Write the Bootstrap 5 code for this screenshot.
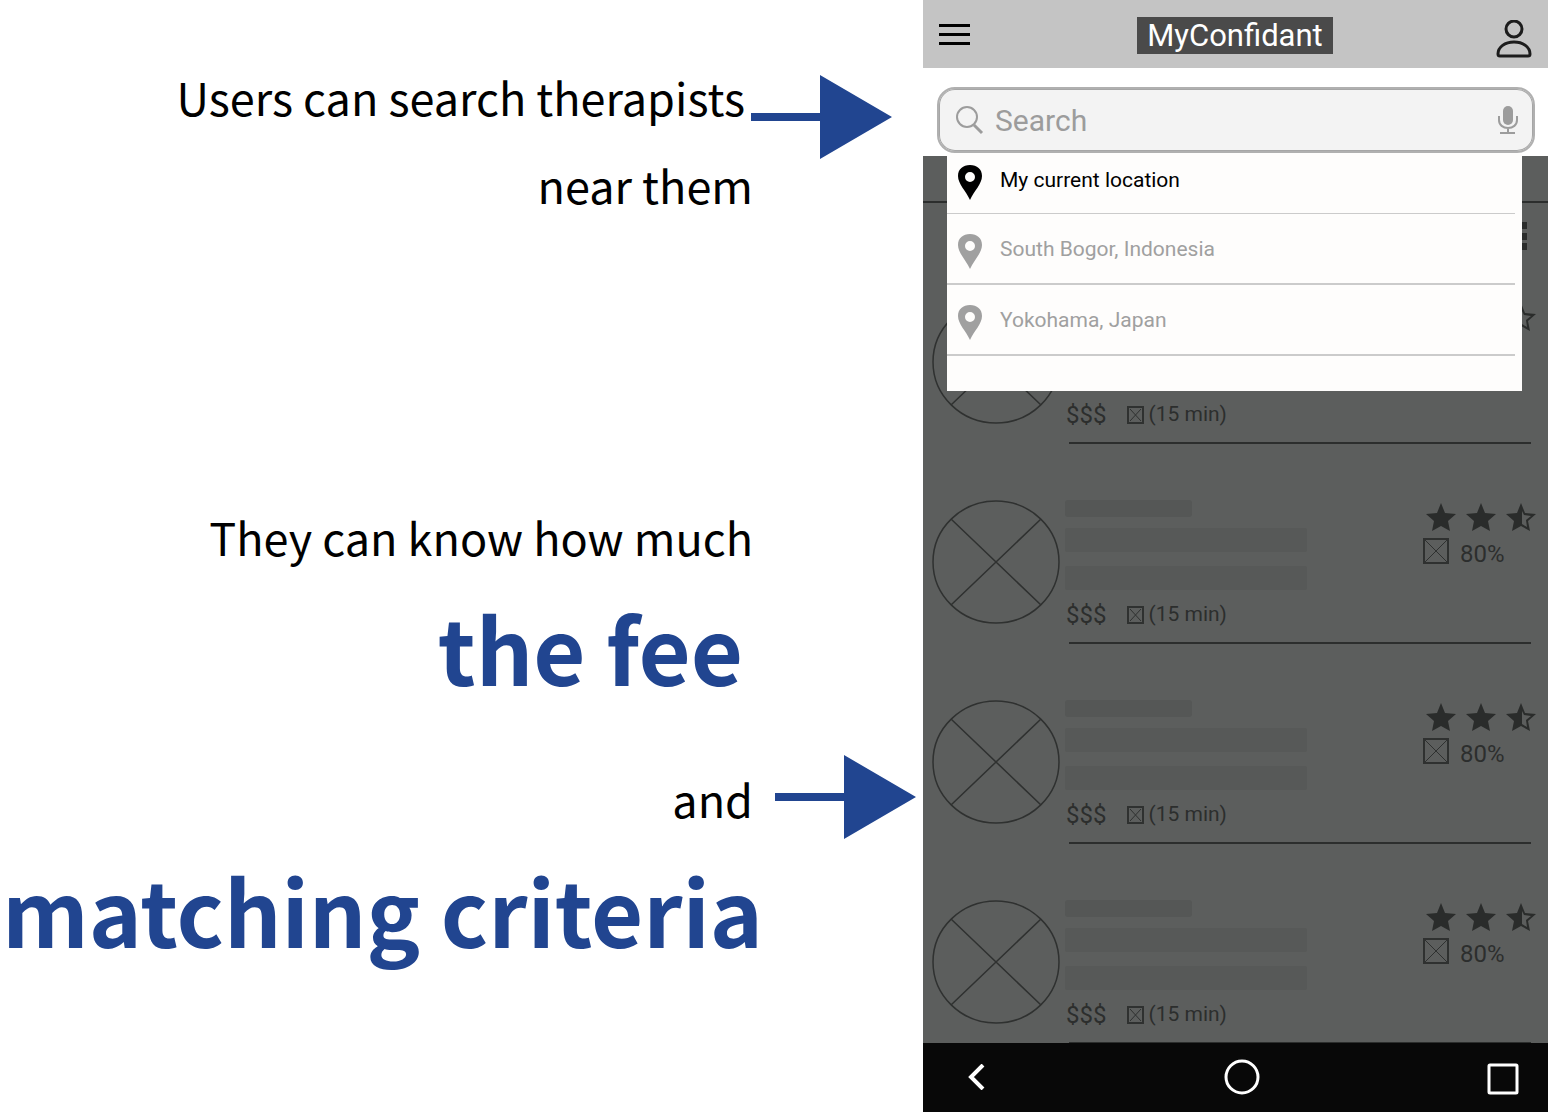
<!DOCTYPE html>
<html lang="en">
<head>
<meta charset="utf-8">
<meta name="viewport" content="width=device-width, initial-scale=1">
<title>MyConfidant</title>
<link href="https://cdn.jsdelivr.net/npm/bootstrap@5.3.0/dist/css/bootstrap.min.css" rel="stylesheet">
<style>
  body { background: #fff; color: #000; font-family: Roboto, "Liberation Sans", sans-serif; }
  .board { display: grid; grid-template-columns: minmax(0, 923fr) minmax(0, 625fr); min-height: 100vh; }
  .notes { font-family: "Noto Sans CJK JP", "Noto Sans", sans-serif; padding-top: 53px; }
  .note-line { font-size: 45px; line-height: 88px; padding-right: 170px; white-space: nowrap; }
  .note-arrowed { height: 88px; padding-right: 31px; gap: 6px; }
  .note-arrowed .arrow { margin-top: 40px; }
  .note-arrowed-end { height: 88px; padding-right: 7px; gap: 22px; }
  .note-big { font-size: 90px; line-height: 132px; margin-bottom: 42px; font-weight: 700; color: #214590; padding-right: 160px; white-space: nowrap; }
  .note-big-inset { padding-right: 180px; }
  .note-block { margin-top: 264px; }
  .arrow { width: 141px; height: 84px; fill: #214590; flex: none; }

  .phone-head { height: 68px; background: #c4c4c4; padding: 2px 16px 0 16px; }
  .app-name { font-size: 31px; line-height: 37px; background: #4a4a4a; color: #fff; padding: 0 10px; }
  .icon-btn { background: none; border: 0; padding: 0; line-height: 0; color: #000; }
  .search-zone { height: 88px; padding: 19px 13px 0 14px; z-index: 2; }
  .search-box { height: 66px; border: 2px solid #b0b0b0; border-radius: 18px; background: #f3f3f3; padding: 0 15px 0 16px; gap: 11px; color: #9c9c9c; box-shadow: inset 0 0 0 1px #a6a6a6; }
  .search-box input { border: 0; background: none; outline: 0; padding: 0; font-size: 30px; color: #555; min-width: 0; }
  .search-box input::placeholder { color: #9c9c9c; opacity: 1; }
  .places { position: absolute; top: 85px; left: 24px; right: 26px; height: 238px; background: #fefdfc; padding-right: 7px; }
  .place { display: flex; align-items: center; gap: 18px; padding: 3px 0 0 11px; height: 71px; font-size: 21px; color: #a0a0a0; border-bottom: 2px solid #cbcbcb; text-decoration: none; }
  .place-now { height: 61px; color: #000; border-bottom-width: 1px; padding: 0 0 4px 11px; }
  .pin { width: 24px; height: 35px; margin-top: 3px; fill: currentColor; flex: none; }

  .results { background: #5c5e5d; color: #2c2e2d; overflow: hidden; }
  .tab-strip { height: 47px; border-bottom: 2px solid #2c2e2d; }
  .tool-strip { height: 97px; padding: 19px 21px 0 0; }
  .therapists { gap: 56px; }
  .therapist { height: 144px; padding-left: 9px; gap: 5px; }
  .therapist:last-child { height: 143px; }
  .avatar { width: 128px; height: 124px; flex: none; }
  .ink { fill: none; stroke: #2f3130; stroke-width: 2; }
  .avatar.ink { stroke-width: 1.5; }
  .summary { padding: 0 12px 0 0; }
  .bars { width: 242px; gap: 14px; }
  .bar-line { height: 24px; background: #575958; border-radius: 2px; }
  .bar-name { height: 17px; width: 127px; background: #555756; border-radius: 3px; margin-bottom: -3px; }
  .fee-line { height: 50px; font-size: 21px; gap: 21px; padding-left: 1px; }
  .fee { font-size: 24px; }
  .rule { height: 2px; background: #2c2e2d; margin: 2px 5px 0 4px; }
  .rating { width: 113px; }
  .stars { gap: 10px; padding-top: 3px; }
  .star { width: 30px; height: 29px; fill: #2a2c2b; }
  .match { gap: 11px; font-size: 24px; line-height: 32px; padding-top: 6px; }
  .sys-bar { flex: 1 0 68px; background: #080808; padding: 0 29px 2px 45px; }
  .sys-bar button { color: #fff; }
  .back-btn { width: 28px; text-align: left; }
</style>
<script src="https://cdn.jsdelivr.net/npm/bootstrap@5.3.0/dist/js/bootstrap.bundle.min.js"></script>
</head>
<body>
<svg class="d-none" aria-hidden="true">
  <symbol id="arrow" viewBox="0 0 141 84"><path d="M0 38h69V0l72 42-72 42V46H0z"/></symbol>
  <symbol id="pin" viewBox="0 0 24 35"><path fill-rule="evenodd" d="M12 0C5 0 0 4 0 11c0 8 8 15 12 24 4-9 12-16 12-24C24 4 19 0 12 0zm0 7a5 5 0 1 1 0 10 5 5 0 0 1 0-10z"/></symbol>
  <symbol id="avatar" viewBox="0 0 128 124"><ellipse cx="64" cy="62" rx="63" ry="61"/><path d="M19 19l90 86M109 19l-90 86"/></symbol>
  <symbol id="crossbox" viewBox="0 0 26 26"><path d="M1 1h24v24H1z"/><path stroke-width="1" d="M2 2l22 22M24 2L2 24"/></symbol>
  <symbol id="crossbox-sm" viewBox="0 0 17 18"><path d="M1 1h15v16H1z"/><path stroke-width="1" d="M3 3l11 12M14 3L3 15"/></symbol>
  <symbol id="star" viewBox="0 0 30 29"><path d="M15 0l4 10 11 1-8 7 2 10-9-5-9 5 2-10-8-7 11-1z"/></symbol>
  <symbol id="star-half" viewBox="0 0 30 29"><path fill-rule="evenodd" d="M15 0l4 10 11 1-8 7 2 10-9-5-9 5 2-10-8-7 11-1zM16 8v13l5 3-1-7 5-4-7-1z"/></symbol>
</svg>

<main class="board">
  <section class="notes text-end">
    <div class="note-line note-arrowed d-flex justify-content-end align-items-center">
      <span>Users can search therapists</span>
      <svg class="arrow" aria-hidden="true"><use href="#arrow"/></svg>
    </div>
    <div class="note-line">near them</div>
    <div class="note-line note-block">They can know how much</div>
    <div class="note-big note-big-inset">the fee</div>
    <div class="note-line note-arrowed-end d-flex justify-content-end align-items-start">
      <span>and</span>
      <svg class="arrow" aria-hidden="true"><use href="#arrow"/></svg>
    </div>
    <div class="note-big">matching criteria</div>
  </section>

  <section class="d-flex flex-column">
    <header class="phone-head d-flex justify-content-between align-items-center">
      <button class="icon-btn" type="button" aria-label="Menu">
        <svg width="31" height="22"><path d="M0 0h31v3H0zM0 9h31v3H0zM0 18h31v3H0z"/></svg>
      </button>
      <div class="app-name ms-1">MyConfidant</div>
      <button class="icon-btn pt-2" type="button" aria-label="Profile">
        <svg width="36" height="38" fill="none" stroke="#1c1c1c" stroke-width="3"><ellipse cx="18" cy="9" rx="8" ry="8"/><path d="M2 34c0-7 7-12 16-12s16 5 16 12c0 2-1 2-2 2H4c-1 0-2 0-2-2z"/></svg>
      </button>
    </header>

    <div class="search-zone position-relative">
      <form class="search-box d-flex align-items-center" role="search">
        <svg width="29" height="30" fill="none" stroke="currentColor" stroke-width="2" aria-hidden="true"><circle cx="12" cy="12" r="10"/><path stroke-width="3" d="M19 20l8 8"/></svg>
        <input class="flex-fill" type="text" placeholder="Search" aria-label="Search">
        <button class="icon-btn" type="button" aria-label="Voice search">
          <svg width="20" height="29"><rect x="5" y="0" width="10" height="19" rx="5" fill="#9c9c9c"/><path d="M1 10v4c0 5 4 8 9 8s9-3 9-8v-4M10 22v5M2 27h15" fill="none" stroke="#9c9c9c" stroke-width="2"/></svg>
        </button>
      </form>
      <nav class="places" aria-label="Locations">
        <a class="place place-now" href="#"><svg class="pin"><use href="#pin"/></svg>My current location</a>
        <a class="place" href="#"><svg class="pin"><use href="#pin"/></svg>South Bogor, Indonesia</a>
        <a class="place" href="#"><svg class="pin"><use href="#pin"/></svg>Yokohama, Japan</a>
      </nav>
    </div>

    <div class="results">
      <div class="tab-strip"></div>
      <div class="tool-strip d-flex justify-content-end">
        <svg width="7" height="28" fill="#2a2c2b" aria-hidden="true"><path d="M0 0h7v7H0zM0 11h7v7H0zM0 21h7v7H0z"/></svg>
      </div>
      <div class="therapists d-flex flex-column">
        <article class="therapist d-flex">
          <svg class="avatar ink"><use href="#avatar"/></svg>
          <div class="summary flex-fill">
            <div class="d-flex justify-content-between">
              <div class="bars d-flex flex-column"><div class="bar-name"></div><div class="bar-line"></div><div class="bar-line"></div></div>
              <div class="rating">
                <div class="stars d-flex justify-content-end"><svg class="star"><use href="#star"/></svg><svg class="star"><use href="#star"/></svg><svg class="star"><use href="#star-half"/></svg></div>
                <div class="match d-flex"><svg class="ink" width="26" height="26"><use href="#crossbox"/></svg>80%</div>
              </div>
            </div>
            <div class="fee-line d-flex align-items-center"><span class="fee">$$$</span><span class="d-flex align-items-center gap-1"><svg class="ink" width="17" height="18"><use href="#crossbox-sm"/></svg>(15 min)</span></div>
            <div class="rule"></div>
          </div>
        </article>
        <article class="therapist d-flex">
          <svg class="avatar ink"><use href="#avatar"/></svg>
          <div class="summary flex-fill">
            <div class="d-flex justify-content-between">
              <div class="bars d-flex flex-column"><div class="bar-name"></div><div class="bar-line"></div><div class="bar-line"></div></div>
              <div class="rating">
                <div class="stars d-flex justify-content-end"><svg class="star"><use href="#star"/></svg><svg class="star"><use href="#star"/></svg><svg class="star"><use href="#star-half"/></svg></div>
                <div class="match d-flex"><svg class="ink" width="26" height="26"><use href="#crossbox"/></svg>80%</div>
              </div>
            </div>
            <div class="fee-line d-flex align-items-center"><span class="fee">$$$</span><span class="d-flex align-items-center gap-1"><svg class="ink" width="17" height="18"><use href="#crossbox-sm"/></svg>(15 min)</span></div>
            <div class="rule"></div>
          </div>
        </article>
        <article class="therapist d-flex">
          <svg class="avatar ink"><use href="#avatar"/></svg>
          <div class="summary flex-fill">
            <div class="d-flex justify-content-between">
              <div class="bars d-flex flex-column"><div class="bar-name"></div><div class="bar-line"></div><div class="bar-line"></div></div>
              <div class="rating">
                <div class="stars d-flex justify-content-end"><svg class="star"><use href="#star"/></svg><svg class="star"><use href="#star"/></svg><svg class="star"><use href="#star-half"/></svg></div>
                <div class="match d-flex"><svg class="ink" width="26" height="26"><use href="#crossbox"/></svg>80%</div>
              </div>
            </div>
            <div class="fee-line d-flex align-items-center"><span class="fee">$$$</span><span class="d-flex align-items-center gap-1"><svg class="ink" width="17" height="18"><use href="#crossbox-sm"/></svg>(15 min)</span></div>
            <div class="rule"></div>
          </div>
        </article>
        <article class="therapist d-flex">
          <svg class="avatar ink"><use href="#avatar"/></svg>
          <div class="summary flex-fill">
            <div class="d-flex justify-content-between">
              <div class="bars d-flex flex-column"><div class="bar-name"></div><div class="bar-line"></div><div class="bar-line"></div></div>
              <div class="rating">
                <div class="stars d-flex justify-content-end"><svg class="star"><use href="#star"/></svg><svg class="star"><use href="#star"/></svg><svg class="star"><use href="#star-half"/></svg></div>
                <div class="match d-flex"><svg class="ink" width="26" height="26"><use href="#crossbox"/></svg>80%</div>
              </div>
            </div>
            <div class="fee-line d-flex align-items-center"><span class="fee">$$$</span><span class="d-flex align-items-center gap-1"><svg class="ink" width="17" height="18"><use href="#crossbox-sm"/></svg>(15 min)</span></div>
            <div class="rule"></div>
          </div>
        </article>
      </div>
    </div>

    <footer class="sys-bar d-flex justify-content-between align-items-center">
      <button class="icon-btn back-btn" type="button" aria-label="Back"><svg width="18" height="26" fill="none" stroke="currentColor" stroke-width="4"><path d="M15 1L3 13l12 12"/></svg></button>
      <button class="icon-btn" type="button" aria-label="Home"><svg width="36" height="36" fill="none" stroke="currentColor" stroke-width="3"><circle cx="18" cy="18" r="16"/></svg></button>
      <button class="icon-btn pt-1" type="button" aria-label="Recent apps"><svg width="32" height="32" fill="none" stroke="currentColor" stroke-width="3"><rect x="2" y="2" width="28" height="28" rx="1"/></svg></button>
    </footer>
  </section>
</main>
</body>
</html>
